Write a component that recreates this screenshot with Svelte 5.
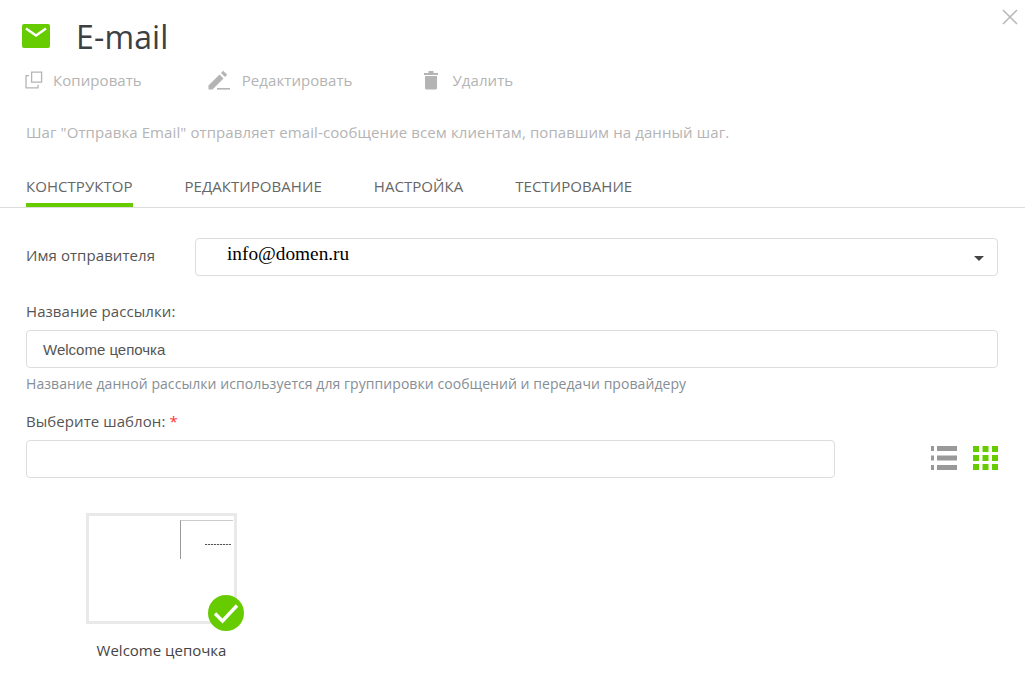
<script>
  let tabs = ["Конструктор", "Редактирование", "Настройка", "Тестирование"];
  let active = 0;
</script>

<div class="modal">
  <button class="close" aria-label="Закрыть">
    <svg viewBox="0 0 16 16" width="16" height="16">
      <path d="M1 1l14 14M15 1L1 15" stroke="#b9b9b9" stroke-width="1.6" fill="none" />
    </svg>
  </button>

  <div class="head">
    <svg class="mail" viewBox="0 0 28 24" width="28" height="24">
      <rect width="28" height="24" rx="2" fill="#66cc00" />
      <path d="M4 4.500L14 11.500L24 4.500" stroke="#fff" stroke-width="2.400" fill="none" />
    </svg>
    <h1>E-mail</h1>
  </div>

  <div class="actions">
    <div class="action copy">
      <svg viewBox="0 0 18 18" width="18" height="18" fill="none" stroke="#b4b4b4" stroke-width="1.3">
        <path d="M6.600 1.200h10v10h-10z" />
        <path d="M4 4.600H1v12.200h12v-3" />
      </svg>
      <span>Копировать</span>
    </div>
    <div class="action edit">
      <svg viewBox="0 0 22 20" width="22" height="20" fill="#b4b4b4">
        <path d="M0.500 15.500L11.500 4.500L15.500 8.500L4.500 19.500H0.500z" />
        <path d="M13 3L15.200 0.800L19.200 4.800L17 7z" />
        <path d="M9 18h13v1.600H9z" />
      </svg>
      <span>Редактировать</span>
    </div>
    <div class="action remove">
      <svg viewBox="0 0 16 20" width="16" height="20" fill="#b4b4b4">
        <path d="M1 3h14v2H1zM5.500 1h5v2h-5z" />
        <path d="M2 6h12v12a1.600 1.600 0 0 1-1.600 1.600H3.600A1.600 1.600 0 0 1 2 18z" />
      </svg>
      <span>Удалить</span>
    </div>
  </div>

  <p class="desc">Шаг "Отправка Email" отправляет email-сообщение всем клиентам, попавшим на данный шаг.</p>

  <div class="tabs">
    {#each tabs as tab, i}
      <div class="tab" class:active={i === active}>{tab}</div>
    {/each}
  </div>

  <div class="form">
    <div class="sender">
      <div class="label">Имя отправителя</div>
      <div class="select">
        <span>info@domen.ru</span>
        <i class="caret"></i>
      </div>
    </div>

    <div class="label top">Название рассылки:</div>
    <div class="input name">Welcome цепочка</div>
    <div class="hint">Название данной рассылки используется для группировки сообщений и передачи провайдеру</div>

    <div class="label pick">Выберите шаблон: <b>*</b></div>
    <div class="search">
      <div class="input grow"></div>
      <div class="views">
        <svg viewBox="0 0 26 24" width="26" height="24" fill="#999">
          <path d="M0 0h3v5H0zM6 0h20v5H6zM0 9.500h3v5H0zM6 9.500h20v5H6zM0 19h3v5H0zM6 19h20v5H6z" />
        </svg>
        <svg viewBox="0 0 25 24" width="25" height="24" fill="#66cc00">
          <path d="M0 0h6v6H0zM9.500 0h6v6h-6zM19 0h6v6h-6zM0 9h6v6H0zM9.500 9h6v6h-6zM19 9h6v6h-6zM0 18h6v6H0zM9.500 18h6v6h-6zM19 18h6v6h-6z" />
        </svg>
      </div>
    </div>

    <div class="template">
      <div class="thumb">
        <div class="preview">
          <i class="dots"></i>
        </div>
        <svg class="check" viewBox="0 0 36 36" width="36" height="36">
          <circle cx="18" cy="18" r="18" fill="#66cc00" />
          <path d="M7 18.500L14.500 26L29 10.500" stroke="#fff" stroke-width="3.400" fill="none" />
        </svg>
      </div>
      <div class="tname">Welcome цепочка</div>
    </div>
  </div>
</div>

<style>
  :global(body) {
    background: #fff;
  }
  .modal {
    position: relative;
    height: 679px;
    overflow: hidden;
    font-family: "Open Sans", sans-serif;
    font-size: 15px;
    color: #555;
  }
  .close {
    position: absolute;
    top: 9px;
    right: 7px;
    padding: 0;
    border: 0;
    background: none;
    line-height: 0;
  }
  .head {
    display: flex;
    align-items: center;
    padding: 18px 0 0 22px;
    height: 38px;
  }
  .mail {
    margin-top: -2px;
  }
  .head h1 {
    margin: 0 0 0 26px;
    font-size: 32px;
    font-weight: 400;
    line-height: 38px;
    color: #3c4043;
    letter-spacing: 0.15px;
  }
  .actions {
    display: flex;
    align-items: center;
    margin-top: 14px;
    padding-left: 25px;
    height: 20px;
    color: #b4b4b4;
    font-size: 15px;
    letter-spacing: 0.07px;
  }
  .action {
    display: flex;
    align-items: center;
  }
  .copy span {
    margin-left: 10px;
  }
  .edit {
    margin-left: 66px;
  }
  .edit span {
    margin-left: 12px;
  }
  .remove {
    margin-left: 70px;
  }
  .remove span {
    margin-left: 14px;
  }
  .desc {
    margin: 32px 0 0 26px;
    font-size: 15px;
    line-height: 20px;
    letter-spacing: 0.1px;
    color: #b4b4b4;
  }
  .tabs {
    display: flex;
    gap: 52px;
    margin-top: 25px;
    padding-left: 26px;
    border-bottom: 1px solid #ddd;
    height: 40px;
  }
  .tab {
    height: 40px;
    line-height: 20px;
    padding-top: 9px;
    box-sizing: border-box;
    color: #666;
    font-size: 15px;
    letter-spacing: 0.05px;
    text-transform: uppercase;
  }
  .tab.active {
    border-bottom: 4px solid #66cc00;
    height: 40px;
  }
  .form {
    padding: 30px 27px 0 26px;
  }
  .sender {
    display: flex;
    align-items: center;
  }
  .label {
    color: #555;
    line-height: 20px;
    width: 169px;
    letter-spacing: 0.07px;
  }
  .sender .label {
    padding-bottom: 4px;
  }
  .label.top,
  .label.pick {
    width: auto;
  }
  .label.top {
    margin-top: 25px;
  }
  .label.pick {
    margin-top: 17px;
  }
  .label b {
    color: #f33;
    font-weight: 400;
  }
  .select,
  .input {
    box-sizing: border-box;
    height: 38px;
    border: 1px solid #ddd;
    border-radius: 4px;
    background: #fff;
  }
  .select {
    flex: 1;
    display: flex;
    align-items: center;
    justify-content: space-between;
    padding: 0 13px 0 31px;
  }
  .select span {
    font-family: "Liberation Serif", serif;
    font-size: 19.300px;
    color: #000;
    position: relative;
    top: -3px;
  }
  .caret {
    width: 0;
    height: 0;
    border-left: 5px solid transparent;
    border-right: 5px solid transparent;
    border-top: 5px solid #444;
    margin-top: 2px;
  }
  .input.name {
    margin-top: 9px;
    padding-left: 16px;
    line-height: 38px;
    font-family: "Liberation Sans", sans-serif;
    font-size: 15px;
    color: #555;
  }
  .hint {
    margin-top: 6px;
    line-height: 20px;
    font-size: 14px;
    letter-spacing: 0.06px;
    color: #868e96;
  }
  .search {
    display: flex;
    align-items: center;
    margin-top: 9px;
  }
  .grow {
    width: 809px;
  }
  .views {
    display: flex;
    gap: 16px;
    margin-left: auto;
    margin-top: -3px;
  }
  .template {
    width: 151px;
    margin: 35px 0 0 60px;
    display: flex;
    flex-direction: column;
    align-items: center;
  }
  .thumb {
    position: relative;
    box-sizing: border-box;
    width: 151px;
    height: 111px;
    flex: none;
    border: 3px solid #e9e9e9;
    background: #fff;
  }
  .preview {
    position: absolute;
    top: 4px;
    right: 1px;
    width: 52px;
    height: 38px;
    border-left: 1px solid #999;
    border-top: 1px solid #ccc;
  }
  .dots {
    position: absolute;
    top: 23px;
    right: 2px;
    width: 26px;
    height: 1px;
    background: repeating-linear-gradient(90deg, #555 0 2px, #ddd 2px 3px);
  }
  .check {
    position: absolute;
    right: -10px;
    bottom: -10px;
  }
  .tname {
    margin-top: 16px;
    line-height: 20px;
    font-size: 15px;
    white-space: nowrap;
    color: #444;
  }
</style>
